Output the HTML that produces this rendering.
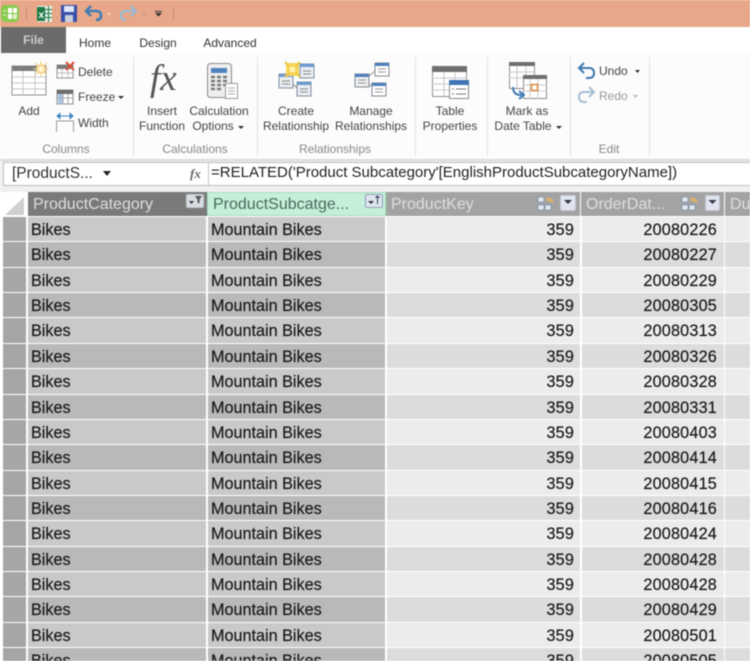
<!DOCTYPE html>
<html><head><meta charset="utf-8"><style>
html,body{margin:0;padding:0;background:#fff}
#p{position:relative;width:750px;height:661px;overflow:hidden;background:#fff;font-family:"Liberation Sans",sans-serif;filter:blur(.45px)}
.a{position:absolute}
.t{position:absolute;font-size:12px;color:#444;white-space:nowrap;text-align:center;line-height:16px}
.g{position:absolute;font-size:12px;color:#888;white-space:nowrap;text-align:center;line-height:16px}
.sep{position:absolute;top:57px;width:1px;height:99px;background:#e2e2e2}
.r{position:absolute;left:0;width:750px;height:25px;font-size:16.2px;color:#1a1a1a;line-height:25px;-webkit-text-stroke:.2px #1a1a1a}
.r div{position:absolute;top:-1px;height:27px;white-space:nowrap;border-top:1px solid #fff;box-sizing:border-box;padding-top:1px}
.c0{left:3px;width:23px;background:#a6a6a6}
.c1{left:28px;width:178px;padding-left:3px}
.c2{left:208px;width:177px;padding-left:3px}
.c3{left:387px;width:193px;text-align:right;padding-right:6px;letter-spacing:.15px}
.c4{left:582px;width:142px;text-align:right;padding-right:7px;letter-spacing:.2px}
.c5{left:725px;width:25px}
.o .c1,.o .c2{background:#c9c9c9}.o .c3,.o .c4,.o .c5{background:#ececec}
.e .c1,.e .c2{background:#b9b9b9}.e .c3,.e .c4,.e .c5{background:#dcdcdc}
.h{position:absolute;top:192px;height:24px;font-size:16px;line-height:25px;white-space:nowrap;color:#dedede;box-sizing:border-box;padding-left:5px}
.b{position:absolute;background:#dfe4ee;border:1px solid #c4c8d0;box-sizing:border-box;border-radius:2px}
</style></head><body><div id="p">

<div class="a" style="left:0;top:0;width:750px;height:27px;background:#e8a788"></div>
<svg class="a" style="left:0;top:0" width="200" height="27" viewBox="0 0 200 27">
<path d="M4 5h12l3 3v11l-3 3H4l-3-3V8z" fill="#86cc4c"/><rect x="8" y="8" width="4" height="5" fill="#fff"/><rect x="13" y="8" width="4" height="5" fill="#fff"/><rect x="8" y="14" width="4" height="5" fill="#fff"/><rect x="13" y="14" width="4" height="5" fill="#dff2cf"/><path d="M3 11h3M3 15h3" stroke="#e8f7da"/>
<rect x="26" y="6" width="1" height="15" fill="#c98f73"/>
<rect x="37" y="6" width="15" height="16" fill="#e4f0e8"/><path d="M45 9.500h7M45 13.500h7M45 17.500h7M48.500 6v16" stroke="#1f7a45"/><rect x="37" y="7" width="8" height="14" fill="#1f7a45"/><text x="38.500" y="18" font-size="10" font-weight="bold" fill="#fff" font-family="Liberation Sans">x</text>
<rect x="61" y="5" width="16" height="17" fill="#3a4fa8"/><rect x="64" y="6" width="10" height="6" fill="#dfe6f5"/><rect x="65" y="15" width="8" height="7" fill="#c9cfdc"/>
<path d="M91 6l-5 5 5 5M87 11h9q5 0 5 4.500t-5 4.500" fill="none" stroke="#3f7cb5" stroke-width="2.500"/>
<path d="M107 13l4 0-2 2.500z" fill="#f0d8cc"/>
<path d="M131 6l5 5-5 5M135 11h-9q-5 0-5 4.500t5 4.500" fill="none" stroke="#9fb8cf" stroke-width="2.500"/>
<path d="M142 13l4 0-2 2.500z" fill="#c8957a"/>
<path d="M155 11h7v1h-7zM155 13h7l-3.500 3.500z" fill="#333"/>
<rect x="173" y="6" width="1" height="15" fill="#c98f73"/>
</svg>

<div class="a" style="left:1px;top:27px;width:65px;height:26px;background:#6b6b6b;color:#ccc;font-size:12px;font-weight:bold;line-height:26px;text-align:center">File</div>
<div class="a" style="left:66px;top:27px;width:684px;height:26px;background:#fff"></div>
<div class="t" style="left:66px;top:35px;width:58px;color:#333">Home</div>
<div class="t" style="left:128px;top:35px;width:60px;color:#333">Design</div>
<div class="t" style="left:195px;top:35px;width:70px;color:#333">Advanced</div>
<div class="a" style="left:0;top:53px;width:750px;height:108px;background:#fcfcfc"></div>
<div class="a" style="left:0;top:159px;width:750px;height:2px;background:#dcdcdc"></div>

<div class="sep" style="left:133px"></div><div class="sep" style="left:257px"></div><div class="sep" style="left:415px"></div><div class="sep" style="left:487px"></div><div class="sep" style="left:570px"></div><div class="sep" style="left:649px"></div>

<svg class="a" style="left:0;top:55px" width="750" height="80" viewBox="0 55 750 80">
<!-- Add -->
<rect x="12" y="66" width="34" height="29" fill="#fff" stroke="#8f8f8f"/><rect x="12" y="66" width="34" height="5" fill="#7d7d7d"/><path d="M12 77h34M12 83h34M12 89h34M23 71v24M35 71v24" stroke="#c6c6c6"/>
<circle cx="41" cy="69" r="5" fill="#f6d58b"/><path d="M41 61v16M33 69h16M35 63l12 12M47 63l-12 12" stroke="#f1cb80"/><circle cx="41" cy="69" r="3" fill="#fff5d0"/>
<!-- Delete -->
<rect x="57" y="65" width="16" height="13" fill="#fff" stroke="#8f8f8f"/><rect x="57" y="65" width="16" height="4" fill="#7d7d7d"/><path d="M62 69v9M68 69v9M57 73h16" stroke="#bbb"/><path d="M66 62l8 8M74 62l-8 8" stroke="#d9533a" stroke-width="2"/>
<!-- Freeze -->
<rect x="57" y="90" width="16" height="14" fill="#fff" stroke="#8f8f8f"/><rect x="57" y="90" width="16" height="4" fill="#6d6d6d"/><rect x="58" y="94" width="5" height="10" fill="#a9c5e4"/><path d="M63 94v10M68 94v10M57 98h16" stroke="#aaa"/>
<!-- Width -->
<path d="M57 116h16M57 116l3-2.500v5zM73 116l-3-2.500v5z" stroke="#3f86c6" fill="#3f86c6"/><path d="M56.500 132v-11h17v11" fill="none" stroke="#999"/>
<!-- Calc options -->
<rect x="207.500" y="63.500" width="24" height="34" rx="3" fill="#eee" stroke="#8a8a8a"/><rect x="211" y="68" width="16" height="5" fill="#4f81bd"/>
<path d="M211 77h4M217 77h4M223 77h4M211 81h4M217 81h4M223 81h4M211 85h4M217 85h4M223 85h4M211 89h4M217 89h4" stroke="#7a7a7a" stroke-width="2.500"/>
<rect x="225.500" y="83.500" width="12" height="15" fill="#fff" stroke="#999"/><path d="M228 88h7M228 91h7M228 94h7" stroke="#aaa"/>
<!-- Create Relationship -->
<rect x="279" y="74" width="14" height="14" fill="#e9edf2" stroke="#7f8ea0"/><rect x="279" y="74" width="14" height="3" fill="#6d9ad0"/><path d="M282 81h8M282 84h8" stroke="#8a8a8a"/>
<rect x="300" y="64" width="14" height="14" fill="#e9edf2" stroke="#7f8ea0"/><rect x="300" y="64" width="14" height="3" fill="#6d9ad0"/><path d="M303 71h8M303 74h8" stroke="#8a8a8a"/>
<rect x="297" y="82" width="14" height="14" fill="#e9edf2" stroke="#7f8ea0"/><rect x="297" y="82" width="14" height="3" fill="#6d9ad0"/><path d="M300 89h8M300 92h8" stroke="#8a8a8a"/>
<path d="M293 84l4 4" stroke="#888"/>
<rect x="286" y="63" width="13" height="13" fill="#f5d75a"/><path d="M285 62l4 4M300 62l-4 4M285 77l4-4M300 77l-4-4" stroke="#ecc544" stroke-width="2"/><rect x="290" y="67" width="5" height="5" fill="#fff3b5"/>
<!-- Manage -->
<rect x="355" y="74" width="14" height="13" fill="#eee" stroke="#808a96"/><rect x="355" y="74" width="14" height="3" fill="#4f81bd"/><path d="M358 80h8M358 83h8" stroke="#999"/>
<rect x="375" y="63" width="14" height="13" fill="#fff" stroke="#808a96"/><rect x="375" y="63" width="14" height="3" fill="#4f81bd"/><path d="M378 69h8M378 72h8" stroke="#999"/>
<rect x="372" y="83" width="14" height="13" fill="#fff" stroke="#808a96"/><rect x="372" y="83" width="14" height="3" fill="#4f81bd"/><path d="M375 89h8M375 92h8" stroke="#999"/>
<path d="M369 76l6-5M369 84l3 3" stroke="#999"/>
<!-- Table Properties -->
<rect x="432.500" y="66.500" width="34" height="30" fill="#fff" stroke="#8f8f8f"/><rect x="432" y="66" width="35" height="6" fill="#6f6f6f"/><path d="M432 78h35M432 84h35M432 90h35M444 72v24M455 72v24" stroke="#c8c8c8"/>
<rect x="449.500" y="80.500" width="19" height="18" fill="#fff" stroke="#8a8a8a"/><rect x="449" y="80" width="20" height="5" fill="#3f74b5"/><path d="M452 89h2M456 89h10M452 94h2M456 94h10" stroke="#777"/>
<!-- Date table -->
<rect x="509.500" y="62.500" width="25" height="26" fill="#fff" stroke="#8f8f8f"/><rect x="509" y="62" width="26" height="4" fill="#6f6f6f"/><path d="M509 72h26M509 78h26M517 66v22M526 66v22" stroke="#c8c8c8"/>
<rect x="523.500" y="75.500" width="23" height="23" fill="#fff" stroke="#8a8a8a"/><rect x="523" y="75" width="24" height="4" fill="#6f6f6f"/><path d="M523 85h24M523 91h24M530 79v20M538 79v20" stroke="#c8c8c8"/><rect x="531.500" y="84.500" width="6" height="6" fill="#fff" stroke="#e08a3c" stroke-width="1.500"/>
<path d="M513 87q0 8 8 8h2M519 91l5 4-5 4" fill="none" stroke="#3f7cb5" stroke-width="2"/>
<!-- Undo Redo -->
<path d="M584 63l-5 5 5 5M580 68h9q5 0 5 5t-5 5h-3" fill="none" stroke="#3f78ae" stroke-width="2"/>
<path d="M589 87l5 5-5 5M593 92h-9q-5 0-5 5t5 5h3" fill="none" stroke="#a8bfd3" stroke-width="2"/>
</svg>

<div class="t" style="left:9px;top:103px;width:40px">Add</div>
<div class="t" style="left:78px;top:64px">Delete</div>
<div class="t" style="left:78px;top:89px">Freeze</div>
<div class="t" style="left:78px;top:115px">Width</div>
<svg class="a" style="left:0;top:0" width="750" height="140" viewBox="0 0 750 140"><path d="M118 96h6l-3 3zM238 126h6l-3 3zM556 126h6l-3 3zM635 70h5l-2.500 3z" fill="#333"/><path d="M633 95h5l-2.500 3z" fill="#bbb"/></svg>
<div class="a" style="left:150px;top:57px;font:italic 37px 'Liberation Serif',serif;color:#555">fx</div>
<div class="t" style="left:137px;top:103px;width:50px">Insert</div>
<div class="t" style="left:137px;top:118px;width:50px">Function</div>
<div class="t" style="left:186px;top:103px;width:66px">Calculation</div>
<div class="t" style="left:180px;top:118px;width:66px">Options</div>
<div class="t" style="left:262px;top:103px;width:68px">Create</div>
<div class="t" style="left:262px;top:118px;width:68px">Relationship</div>
<div class="t" style="left:335px;top:103px;width:72px">Manage</div>
<div class="t" style="left:335px;top:118px;width:72px">Relationships</div>
<div class="t" style="left:421px;top:103px;width:58px">Table</div>
<div class="t" style="left:421px;top:118px;width:58px">Properties</div>
<div class="t" style="left:497px;top:103px;width:60px">Mark as</div>
<div class="t" style="left:491px;top:118px;width:64px">Date Table</div>
<div class="t" style="left:599px;top:63px">Undo</div>
<div class="t" style="left:599px;top:88px;color:#999">Redo</div>
<div class="g" style="left:28px;top:141px;width:76px">Columns</div>
<div class="g" style="left:150px;top:141px;width:90px">Calculations</div>
<div class="g" style="left:290px;top:141px;width:90px">Relationships</div>
<div class="g" style="left:590px;top:141px;width:38px">Edit</div>

<!-- formula bar -->
<div class="a" style="left:0;top:161px;width:750px;height:31px;background:#f0f0f0"></div>
<div class="a" style="left:3px;top:162px;width:747px;height:24px;background:#fff;border:1px solid #bdbdbd;border-right:0;box-sizing:border-box"></div>
<div class="a" style="left:208px;top:162px;width:1px;height:24px;background:#c4c4c4"></div>
<div class="a" style="left:12px;top:165px;font-size:15.500px;line-height:18px;color:#333">[ProductS...</div>
<svg class="a" style="left:103px;top:171px" width="9" height="6"><path d="M0 0h8l-4 5z" fill="#222"/></svg>
<div class="a" style="left:190px;top:166px;font:italic bold 13px 'Liberation Serif',serif;color:#666">fx</div>
<div class="a" style="left:211px;top:164px;font-size:15px;line-height:18px;color:#222;white-space:nowrap">=RELATED('Product Subcategory'[EnglishProductSubcategoryName])</div>

<!-- header -->
<svg class="a" style="left:3px;top:192px" width="24" height="24"><path d="M2 23L21 5V23z" fill="#d0d0d0"/></svg>
<div class="h" style="left:28px;width:179px;background:#7a7a7a">ProductCategory</div>
<div class="h" style="left:207px;width:179px;background:#c6efd9;color:#4a6a5c;border:1px solid #a5dcc0;line-height:23px">ProductSubcatge...</div>
<div class="h" style="left:386px;width:194px;background:#a3a3a3">ProductKey</div>
<div class="h" style="left:581px;width:143px;background:#a3a3a3">OrderDat...</div>
<div class="h" style="left:725px;width:25px;background:#a3a3a3;padding-left:5px">Du</div>
<div class="b" style="left:186px;top:194px;width:18px;height:14px;background:#d8dbe0"></div><div class="b" style="left:365px;top:194px;width:18px;height:14px;border-color:#8fa0c0"></div><div class="b" style="left:560px;top:195px;width:16px;height:16px"></div><div class="b" style="left:705px;top:195px;width:15px;height:16px"></div>
<svg class="a" style="left:0;top:190px" width="750" height="26">
<path d="M189 11h5l-2.500 3zM368 11h6l-3 3zM564 10h8l-4 4zM708.500 10h8l-4 4z" fill="#334"/>
<path d="M195 6h7l-2.500 3.500v4l-2-1v-3z" fill="#555"/><path d="M377.500 14v-8M375.500 8l2-2 2 2" stroke="#345" fill="none"/>
<g fill="#e2e8f0" stroke="#7f93ab" stroke-width=".8"><rect x="538" y="7" width="6" height="5"/><rect x="538" y="15" width="6" height="5"/><rect x="545" y="15" width="6" height="5"/><rect x="682" y="7" width="6" height="5"/><rect x="682" y="15" width="6" height="5"/><rect x="689" y="15" width="6" height="5"/></g>
<path d="M546 8h5l3 3-2 2-3-2h-3zM690 8h5l3 3-2 2-3-2h-3z" fill="#dcb26a"/>
</svg>

<!-- rows -->
<div class="r o" style="top:217px"><div class="c0"></div><div class="c1">Bikes</div><div class="c2">Mountain Bikes</div><div class="c3">359</div><div class="c4">20080226</div><div class="c5"></div></div>
<div class="r e" style="top:242px"><div class="c0"></div><div class="c1">Bikes</div><div class="c2">Mountain Bikes</div><div class="c3">359</div><div class="c4">20080227</div><div class="c5"></div></div>
<div class="r o" style="top:268px"><div class="c0"></div><div class="c1">Bikes</div><div class="c2">Mountain Bikes</div><div class="c3">359</div><div class="c4">20080229</div><div class="c5"></div></div>
<div class="r e" style="top:293px"><div class="c0"></div><div class="c1">Bikes</div><div class="c2">Mountain Bikes</div><div class="c3">359</div><div class="c4">20080305</div><div class="c5"></div></div>
<div class="r o" style="top:318px"><div class="c0"></div><div class="c1">Bikes</div><div class="c2">Mountain Bikes</div><div class="c3">359</div><div class="c4">20080313</div><div class="c5"></div></div>
<div class="r e" style="top:344px"><div class="c0"></div><div class="c1">Bikes</div><div class="c2">Mountain Bikes</div><div class="c3">359</div><div class="c4">20080326</div><div class="c5"></div></div>
<div class="r o" style="top:369px"><div class="c0"></div><div class="c1">Bikes</div><div class="c2">Mountain Bikes</div><div class="c3">359</div><div class="c4">20080328</div><div class="c5"></div></div>
<div class="r e" style="top:395px"><div class="c0"></div><div class="c1">Bikes</div><div class="c2">Mountain Bikes</div><div class="c3">359</div><div class="c4">20080331</div><div class="c5"></div></div>
<div class="r o" style="top:420px"><div class="c0"></div><div class="c1">Bikes</div><div class="c2">Mountain Bikes</div><div class="c3">359</div><div class="c4">20080403</div><div class="c5"></div></div>
<div class="r e" style="top:445px"><div class="c0"></div><div class="c1">Bikes</div><div class="c2">Mountain Bikes</div><div class="c3">359</div><div class="c4">20080414</div><div class="c5"></div></div>
<div class="r o" style="top:471px"><div class="c0"></div><div class="c1">Bikes</div><div class="c2">Mountain Bikes</div><div class="c3">359</div><div class="c4">20080415</div><div class="c5"></div></div>
<div class="r e" style="top:496px"><div class="c0"></div><div class="c1">Bikes</div><div class="c2">Mountain Bikes</div><div class="c3">359</div><div class="c4">20080416</div><div class="c5"></div></div>
<div class="r o" style="top:521px"><div class="c0"></div><div class="c1">Bikes</div><div class="c2">Mountain Bikes</div><div class="c3">359</div><div class="c4">20080424</div><div class="c5"></div></div>
<div class="r e" style="top:547px"><div class="c0"></div><div class="c1">Bikes</div><div class="c2">Mountain Bikes</div><div class="c3">359</div><div class="c4">20080428</div><div class="c5"></div></div>
<div class="r o" style="top:572px"><div class="c0"></div><div class="c1">Bikes</div><div class="c2">Mountain Bikes</div><div class="c3">359</div><div class="c4">20080428</div><div class="c5"></div></div>
<div class="r e" style="top:597px"><div class="c0"></div><div class="c1">Bikes</div><div class="c2">Mountain Bikes</div><div class="c3">359</div><div class="c4">20080429</div><div class="c5"></div></div>
<div class="r o" style="top:623px"><div class="c0"></div><div class="c1">Bikes</div><div class="c2">Mountain Bikes</div><div class="c3">359</div><div class="c4">20080501</div><div class="c5"></div></div>
<div class="r e" style="top:648px"><div class="c0"></div><div class="c1">Bikes</div><div class="c2">Mountain Bikes</div><div class="c3">359</div><div class="c4">20080505</div><div class="c5"></div></div>
</div></body></html>
